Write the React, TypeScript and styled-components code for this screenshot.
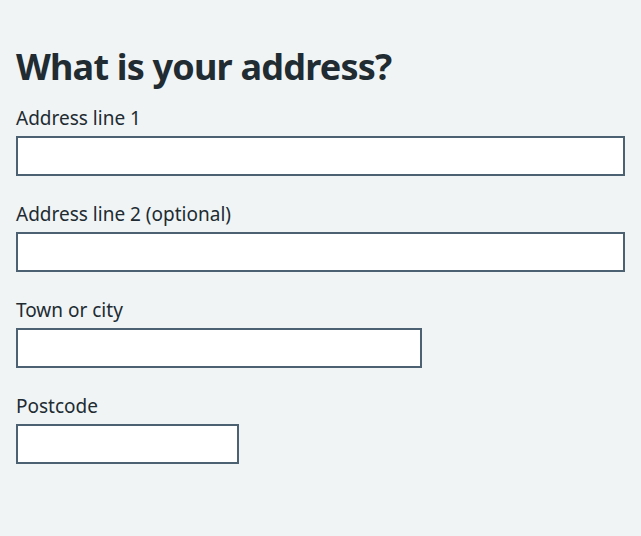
import React from "react";
import styled, { createGlobalStyle } from "styled-components";

const Global = createGlobalStyle`
  html, body { margin: 0; padding: 0; background: #f0f4f5; }
  body { font-family: "Noto Sans", "Open Sans", sans-serif; color: #212b32; }
  * { box-sizing: border-box; }
`;

const Page = styled.main`
  padding: 46px 16px 16px;
  min-height: 536px;
`;

const Fieldset = styled.fieldset`
  margin: 0;
  padding: 0;
  border: 0;
  min-width: 0;
`;

const Legend = styled.legend`
  padding: 0;
  margin: 0 0 16px;
  font-size: 36px;
  line-height: 42px;
  font-weight: 700;
  letter-spacing: -0.8px;
  color: #212b32;
`;

const Group = styled.div`
  margin-bottom: 24px;
`;

const Label = styled.label`
  display: block;
  font-size: 19px;
  line-height: 28px;
  margin-bottom: 4px;
  color: #212b32;
`;

const Input = styled.input<{ $w?: number }>`
  display: block;
  width: ${(p) => (p.$w ? `${p.$w}px` : "100%")};
  height: 40px;
  margin: 0;
  padding: 4px;
  border: 2px solid #4c6272;
  border-radius: 0;
  background: #ffffff;
  font: inherit;
  font-size: 19px;
  appearance: none;
  outline: none;
`;

const fields = [
  { id: "a1", label: "Address line 1" },
  { id: "a2", label: "Address line 2 (optional)" },
  { id: "town", label: "Town or city", w: 406 },
  { id: "pc", label: "Postcode", w: 223 },
];

export default function App() {
  return (
    <>
      <Global />
      <Page>
        <Fieldset>
          <Legend>What is your address?</Legend>
          {fields.map((f) => (
            <Group key={f.id}>
              <Label htmlFor={f.id}>{f.label}</Label>
              <Input id={f.id} type="text" $w={f.w} />
            </Group>
          ))}
        </Fieldset>
      </Page>
    </>
  );
}
